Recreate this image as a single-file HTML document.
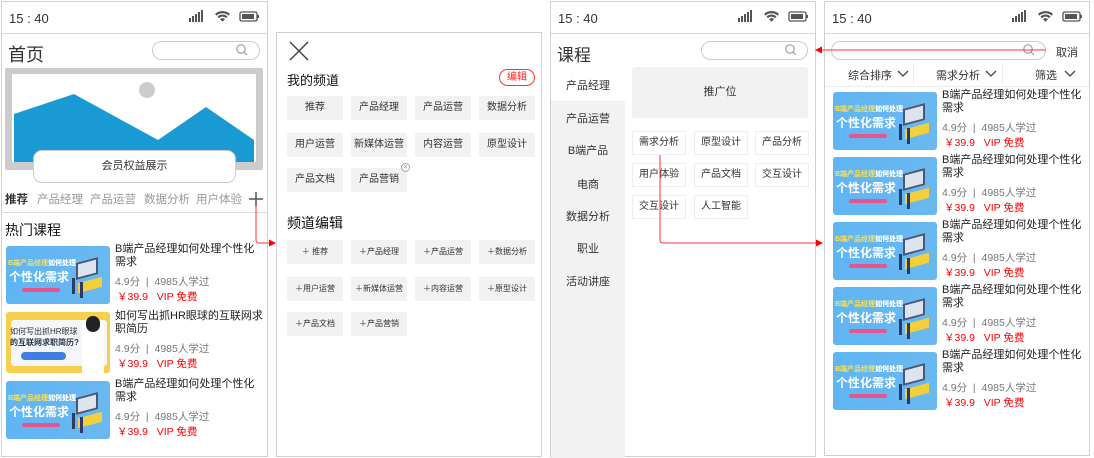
<!DOCTYPE html>
<html><head><meta charset="utf-8"><style>
*{margin:0;padding:0;box-sizing:border-box}
body{width:1094px;height:458px;background:#fff;position:relative;overflow:hidden;font-family:"Liberation Sans","Noto Sans CJK SC",sans-serif;color:#333}
.a{position:absolute;white-space:nowrap}
.scr{position:absolute;border:1px solid #d0d0d0;background:#fff}
.sb{position:absolute;left:0;right:0;top:0;height:32px;border-bottom:1px solid #d8d8d8}
.tm{position:absolute;left:7px;top:9px;font-size:13px;color:#333}
.srch{position:absolute;height:19px;border:1px solid #ccc;border-radius:10px;background:#fff}
.chip{position:absolute;width:56px;height:24px;background:#f2f2f2;font-size:10px;line-height:24px;text-align:center;color:#333}
.tag{position:absolute;width:54px;height:24px;border:1px solid #eee;font-size:10px;line-height:22px;text-align:center;color:#333;background:#fff}
.side{position:absolute;left:0;width:74px;font-size:11px;text-align:center;color:#333}
.ci{position:absolute;width:260px;height:60px}
.im{position:absolute;left:0;top:0;width:104px;height:58px;border-radius:3px;background:linear-gradient(90deg,#5fb5f4,#6ab8f0);overflow:hidden}
.im .t1{position:absolute;left:2px;top:12px;font-size:7px;color:#ffe14d;font-weight:bold}
.im .t1 b{color:#fff}
.im .t2{position:absolute;left:3px;top:22px;font-size:12px;color:#fff;font-weight:bold}
.im .pl{position:absolute;left:16px;top:42px;width:38px;height:4px;border-radius:2px;background:#e8558a}
.im .lp{position:absolute;left:70px;top:14px;width:22px;height:17px;background:#dde4ee;border:2px solid #4a5877;transform:skewY(-15deg)}
.im .bs{position:absolute;left:72px;top:34px;width:24px;height:10px;background:#f3cf3e;transform:skewY(-15deg)}
.im .p1{position:absolute;left:66px;top:32px;width:3px;height:16px;background:#2d3a66}
.im .p2{position:absolute;left:74px;top:36px;width:3px;height:16px;background:#2d3a66}
.ct{position:absolute;left:109px;top:-3px;font-size:11px;line-height:13px;color:#222;white-space:normal;width:148px}
.rt{position:absolute;left:109px;top:28px;font-size:10.5px;color:#777;white-space:nowrap}
.pr{position:absolute;left:111px;top:43px;font-size:10.5px;color:#f00;white-space:nowrap}
svg{position:absolute}
.tb{position:absolute;top:191px;font-size:11.5px;color:#999;white-space:nowrap}
</style></head><body>

<!-- SCREEN 1 -->
<div class="scr" style="left:1px;top:1px;width:267px;height:456px">
 <div class="sb"><div class="tm">15 : 40</div></div>
</div>
<div class="a" style="left:8px;top:41px;font-size:18px;color:#333">首页</div>
<div class="srch" style="left:152px;top:41px;width:108px"></div>
<div style="position:absolute;left:5px;top:68px;width:258px;height:102px;background:#ccc;border-radius:2px"></div>
<div style="position:absolute;left:12px;top:74px;width:244px;height:88px;background:#fff;overflow:hidden">
 <svg width="244" height="88" viewBox="0 0 244 88"><circle cx="135" cy="16" r="8" fill="#ccc"/><polygon points="2,40 62,20 146,66 194,33 242,66 242,88 2,88" fill="#1a9ad2"/></svg>
</div>
<div style="position:absolute;left:33px;top:150px;width:203px;height:33px;background:#fff;border:1px solid #ccc;border-radius:9px;font-size:11px;line-height:31px;text-align:center;color:#333">会员权益展示</div>
<div class="tb" style="left:5px;color:#333;font-weight:bold">推荐</div>
<div class="tb" style="left:37px">产品经理</div>
<div class="tb" style="left:90px">产品运营</div>
<div class="tb" style="left:144px">数据分析</div>
<div class="tb" style="left:196px">用户体验</div>
<svg style="left:248px;top:191px" width="16" height="16"><path d="M8 1V15M1 8H15" stroke="#555" stroke-width="1.5"/></svg>
<div style="position:absolute;left:1px;top:212px;width:266px;height:1px;background:#ddd"></div>
<div class="a" style="left:5px;top:220px;font-size:14px;color:#111">热门课程</div>

<!-- SCREEN 2 -->
<div class="scr" style="left:276px;top:32px;width:266px;height:425px"></div>
<svg style="left:288px;top:40px" width="22" height="22"><path d="M2 2L20 20M20 2L2 20" stroke="#444" stroke-width="1.5"/></svg>
<div class="a" style="left:287px;top:70px;font-size:13px;color:#111">我的频道</div>
<div class="a" style="left:499px;top:69px;width:36px;height:17px;border:1px solid #f33;border-radius:9px;font-size:10px;color:#f22;text-align:center;line-height:15px">编辑</div>
<div class="chip" style="left:287px;top:96px">推荐</div><div class="chip" style="left:351px;top:96px">产品经理</div><div class="chip" style="left:415px;top:96px">产品运营</div><div class="chip" style="left:479px;top:96px">数据分析</div>
<div class="chip" style="left:287px;top:133px">用户运营</div><div class="chip" style="left:351px;top:133px">新媒体运营</div><div class="chip" style="left:415px;top:133px">内容运营</div><div class="chip" style="left:479px;top:133px">原型设计</div>
<div class="chip" style="left:287px;top:168px">产品文档</div><div class="chip" style="left:351px;top:168px">产品营销</div>
<div class="a" style="left:401px;top:163px;width:9px;height:9px;border:1px solid #aaa;border-radius:50%;font-size:7px;line-height:7px;text-align:center;color:#888">×</div>
<div class="a" style="left:287px;top:213px;font-size:14px;color:#111">频道编辑</div>
<div class="chip" style="left:287px;top:240px;font-size:8px">＋ 推荐</div><div class="chip" style="left:351px;top:240px;font-size:8px">＋产品经理</div><div class="chip" style="left:415px;top:240px;font-size:8px">＋产品运营</div><div class="chip" style="left:479px;top:240px;font-size:8px">＋数据分析</div>
<div class="chip" style="left:287px;top:277px;font-size:8px">＋用户运营</div><div class="chip" style="left:351px;top:277px;font-size:8px">＋新媒体运营</div><div class="chip" style="left:415px;top:277px;font-size:8px">＋内容运营</div><div class="chip" style="left:479px;top:277px;font-size:8px">＋原型设计</div>
<div class="chip" style="left:287px;top:312px;font-size:8px">＋产品文档</div><div class="chip" style="left:351px;top:312px;font-size:8px">＋产品营销</div>

<!-- SCREEN 3 -->
<div class="scr" style="left:550px;top:1px;width:266px;height:456px">
 <div class="sb"><div class="tm">15 : 40</div></div>
 <div style="position:absolute;left:0;top:66px;width:74px;height:390px;background:#f2f2f2"></div>
 <div style="position:absolute;left:0;top:66px;width:74px;height:33px;background:#fff"></div>
 <div class="side" style="top:75px">产品经理</div>
 <div class="side" style="top:108px">产品运营</div>
 <div class="side" style="top:140px">B端产品</div>
 <div class="side" style="top:174px">电商</div>
 <div class="side" style="top:206px">数据分析</div>
 <div class="side" style="top:238px">职业</div>
 <div class="side" style="top:271px">活动讲座</div>
</div>
<div class="a" style="left:557px;top:41px;font-size:17px;color:#333">课程</div>
<div class="srch" style="left:701px;top:41px;width:107px"></div>
<div style="position:absolute;left:632px;top:67px;width:176px;height:51px;background:#f2f2f2;border-radius:3px;font-size:11px;line-height:51px;text-align:center">推广位</div>
<div class="tag" style="left:632px;top:131px">需求分析</div><div class="tag" style="left:694px;top:131px">原型设计</div><div class="tag" style="left:755px;top:131px">产品分析</div>
<div class="tag" style="left:632px;top:163px">用户体验</div><div class="tag" style="left:694px;top:163px">产品文档</div><div class="tag" style="left:755px;top:163px">交互设计</div>
<div class="tag" style="left:632px;top:195px">交互设计</div><div class="tag" style="left:694px;top:195px">人工智能</div>

<!-- SCREEN 4 -->
<div class="scr" style="left:824px;top:1px;width:266px;height:455px">
 <div class="sb"><div class="tm">15 : 40</div></div>
</div>
<div class="srch" style="left:831px;top:41px;width:215px"></div>
<div class="a" style="left:1056px;top:44px;font-size:11px;color:#333">取消</div>
<div class="a" style="left:848px;top:67px;font-size:11px;color:#333">综合排序</div>
<div class="a" style="left:936px;top:67px;font-size:11px;color:#333">需求分析</div>
<div class="a" style="left:1035px;top:67px;font-size:11px;color:#333">筛选</div>
<div style="position:absolute;left:913px;top:63px;width:1px;height:22px;background:#eee"></div>
<div style="position:absolute;left:1002px;top:63px;width:1px;height:22px;background:#eee"></div>
<div style="position:absolute;left:825px;top:86px;width:264px;height:1px;background:#eee"></div>
<svg style="left:897px;top:70px" width="12" height="8"><path d="M1 1L6 6L11 1" stroke="#444" fill="none" stroke-width="1.3"/></svg>
<svg style="left:985px;top:70px" width="12" height="8"><path d="M1 1L6 6L11 1" stroke="#444" fill="none" stroke-width="1.3"/></svg>
<svg style="left:1064px;top:70px" width="12" height="8"><path d="M1 1L6 6L11 1" stroke="#444" fill="none" stroke-width="1.3"/></svg>

<!-- status icons & search icons -->
<svg width="1094" height="458" style="left:0;top:0">
 <g id="st" fill="#555">
  <rect x="189" y="18" width="2" height="4"/><rect x="192" y="16" width="2" height="6"/><rect x="195" y="14" width="2" height="8"/><rect x="198" y="12" width="2" height="10"/><rect x="201" y="10" width="2" height="12"/>
  <path d="M215 14a11 11 0 0 1 15 0l-1.5 1.6a9 9 0 0 0-12 0z"/><path d="M217.5 16.6a7 7 0 0 1 10 0l-1.6 1.6a4.5 4.5 0 0 0-6.8 0z"/><path d="M220 19.2a3.5 3.5 0 0 1 5 0l-2.5 2.5z"/>
  <rect x="240" y="12" width="17" height="9" rx="1.5" fill="none" stroke="#555" stroke-width="1.3"/><rect x="242" y="14" width="12" height="5"/><rect x="257.5" y="15" width="1.5" height="3"/>
 </g>
 <use href="#st" x="549"/><use href="#st" x="823"/>
 <g id="mg" fill="none" stroke="#999" stroke-width="1.1"><circle cx="241" cy="49" r="4.2"/><path d="M244 52L247 55"/></g>
 <use href="#mg" x="549"/><use href="#mg" x="787"/>
 <g stroke="#f33" fill="none" stroke-width="1">
  <path d="M256 206V240q0 3 3 3H270"/>
  <path d="M660 155V240q0 3 3 3H816"/>
  <path d="M1046 50H822"/>
 </g>
 <g fill="#f00">
  <path d="M276 243L269 239.5V246.5Z"/>
  <path d="M823 243L816 239.5V246.5Z"/>
  <path d="M815 50L822 46.5V53.5Z"/>
 </g>
</svg>

<!-- course items screen1 -->
<div class="ci" style="left:6px;top:246px"><div class="im"><div class="t1">B端产品经理<b>如何处理</b></div><div class="t2">个性化需求</div><div class="pl"></div><div class="lp"></div><div class="bs"></div><div class="p1"></div><div class="p2"></div></div><div class="ct">B端产品经理如何处理个性化需求</div><div class="rt">4.9分 &nbsp;|&nbsp; 4985人学过</div><div class="pr">￥39.9 &nbsp; VIP 免费</div></div>
<div class="ci" style="left:6px;top:313px"><div class="im" style="background:#f6cf4c;top:-1px;height:61px"><div style="position:absolute;left:5px;top:8px;width:96px;height:46px;background:#f4f6fa;border-radius:3px"></div><div style="position:absolute;left:4px;top:14px;font-size:8px;color:#333">如何写出抓HR眼球</div><div style="position:absolute;left:4px;top:25px;font-size:8px;color:#234;font-weight:bold">的互联网求职简历?</div><div style="position:absolute;left:15px;top:40px;width:45px;height:8px;border-radius:4px;background:#3e7fe0"></div><div style="position:absolute;left:76px;top:6px;width:22px;height:55px;background:#fff;border-radius:10px 10px 0 0"></div><div style="position:absolute;left:80px;top:4px;width:14px;height:16px;background:#222;border-radius:7px"></div></div><div class="ct">如何写出抓HR眼球的互联网求职简历</div><div class="rt">4.9分 &nbsp;|&nbsp; 4985人学过</div><div class="pr">￥39.9 &nbsp; VIP 免费</div></div>
<div class="ci" style="left:6px;top:381px"><div class="im"><div class="t1">B端产品经理<b>如何处理</b></div><div class="t2">个性化需求</div><div class="pl"></div><div class="lp"></div><div class="bs"></div><div class="p1"></div><div class="p2"></div></div><div class="ct">B端产品经理如何处理个性化需求</div><div class="rt">4.9分 &nbsp;|&nbsp; 4985人学过</div><div class="pr">￥39.9 &nbsp; VIP 免费</div></div>

<!-- course items screen4 -->
<div class="ci" style="left:833px;top:92px"><div class="im"><div class="t1">B端产品经理<b>如何处理</b></div><div class="t2">个性化需求</div><div class="pl"></div><div class="lp"></div><div class="bs"></div><div class="p1"></div><div class="p2"></div></div><div class="ct">B端产品经理如何处理个性化需求</div><div class="rt">4.9分 &nbsp;|&nbsp; 4985人学过</div><div class="pr">￥39.9 &nbsp; VIP 免费</div></div>
<div class="ci" style="left:833px;top:157px"><div class="im"><div class="t1">B端产品经理<b>如何处理</b></div><div class="t2">个性化需求</div><div class="pl"></div><div class="lp"></div><div class="bs"></div><div class="p1"></div><div class="p2"></div></div><div class="ct">B端产品经理如何处理个性化需求</div><div class="rt">4.9分 &nbsp;|&nbsp; 4985人学过</div><div class="pr">￥39.9 &nbsp; VIP 免费</div></div>
<div class="ci" style="left:833px;top:222px"><div class="im"><div class="t1">B端产品经理<b>如何处理</b></div><div class="t2">个性化需求</div><div class="pl"></div><div class="lp"></div><div class="bs"></div><div class="p1"></div><div class="p2"></div></div><div class="ct">B端产品经理如何处理个性化需求</div><div class="rt">4.9分 &nbsp;|&nbsp; 4985人学过</div><div class="pr">￥39.9 &nbsp; VIP 免费</div></div>
<div class="ci" style="left:833px;top:287px"><div class="im"><div class="t1">B端产品经理<b>如何处理</b></div><div class="t2">个性化需求</div><div class="pl"></div><div class="lp"></div><div class="bs"></div><div class="p1"></div><div class="p2"></div></div><div class="ct">B端产品经理如何处理个性化需求</div><div class="rt">4.9分 &nbsp;|&nbsp; 4985人学过</div><div class="pr">￥39.9 &nbsp; VIP 免费</div></div>
<div class="ci" style="left:833px;top:352px"><div class="im"><div class="t1">B端产品经理<b>如何处理</b></div><div class="t2">个性化需求</div><div class="pl"></div><div class="lp"></div><div class="bs"></div><div class="p1"></div><div class="p2"></div></div><div class="ct">B端产品经理如何处理个性化需求</div><div class="rt">4.9分 &nbsp;|&nbsp; 4985人学过</div><div class="pr">￥39.9 &nbsp; VIP 免费</div></div>

</body></html>
